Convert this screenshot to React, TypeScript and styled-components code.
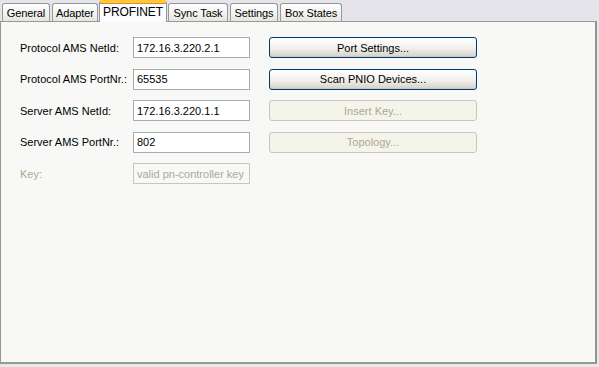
import styled, { createGlobalStyle, css } from "styled-components";
import { useState, Fragment } from "react";

const GlobalStyle = createGlobalStyle`
  html, body {
    margin: 0;
    padding: 0;
    background: #ebeae2;
  }
  body {
    font-family: Tahoma, "Liberation Sans", Arial, sans-serif;
    font-size: 11px;
    color: #000;
  }
`;

const Window = styled.div`
  width: 599px;
  height: 367px;
  display: flex;
  flex-direction: column;
  background: linear-gradient(#e4e4ea 0, #e4e4ea 21px, #ebeae2 21px);
`;

const TabStrip = styled.div`
  display: flex;
  align-items: flex-end;
  height: 21px;
  padding-left: 2px;
  position: relative;
  z-index: 1;
`;

const Tab = styled.div<{ $active?: boolean; $width: number }>`
  width: ${(p) => p.$width}px;
  height: 18px;
  box-sizing: border-box;
  margin-right: 2px;
  display: flex;
  align-items: center;
  justify-content: center;
  border: 1px solid #919b9c;
  border-bottom: none;
  border-radius: 3px 3px 0 0;
  background: linear-gradient(#ffffff, #f1f1ee 60%, #e6e5de);
  color: #000;
  white-space: nowrap;
  letter-spacing: -0.1px;
  ${(p) =>
    p.$active &&
    css`
      height: 22px;
      padding-bottom: 2px;
      margin: 0 1px -1px -1px;
      border-top: 3px solid #ffc83c;
      background: #fcfcfe;
      box-shadow: inset 0 1px 0 #e68b2c;
      font-size: 12px;
    `}
`;

const Panel = styled.div`
  width: 597px;
  height: 343px;
  box-sizing: border-box;
  border: 1px solid #919b9c;
  border-right-width: 2px;
  border-bottom-width: 2px;
  border-right-color: #8d9799;
  background: #f8f8f6;
  display: flex;
  gap: 19px;
  padding: 15px 0 0 19px;
`;

const Form = styled.div`
  display: grid;
  grid-template-columns: 113px 117px;
  grid-auto-rows: 21px;
  row-gap: 10.5px;
  align-items: center;
`;

const Label = styled.label<{ $disabled?: boolean }>`
  color: ${(p) => (p.$disabled ? "#aca899" : "#000")};
  white-space: nowrap;
`;

const Field = styled.input`
  width: 117px;
  height: 21px;
  box-sizing: border-box;
  border: 1px solid #a5acb2;
  background: #fff;
  font: inherit;
  padding: 0 3px;
  color: #000;
  outline: none;
  &:disabled {
    background: #f8f8f6;
    color: #aca899;
    border-color: #c9c7ba;
  }
`;

const Buttons = styled.div`
  display: flex;
  flex-direction: column;
  gap: 10.5px;
  padding-top: 0;
`;

const Button = styled.button`
  width: 208px;
  height: 21px;
  box-sizing: border-box;
  border: 1px solid #003c74;
  border-radius: 3px;
  background: linear-gradient(#ffffff, #f0f0ea 55%, #d6d0c5);
  box-shadow: inset 0 -1px 0 #c7c5d8, inset 0 1px 0 #fff;
  font: inherit;
  color: #000;
  padding: 0;
  &:disabled {
    border-color: #c9c7ba;
    background: #f5f4ea;
    box-shadow: none;
    color: #aca899;
  }
`;

const fields = [
  { label: "Protocol AMS NetId:", value: "172.16.3.220.2.1" },
  { label: "Protocol AMS PortNr.:", value: "65535" },
  { label: "Server AMS NetId:", value: "172.16.3.220.1.1" },
  { label: "Server AMS PortNr.:", value: "802" },
];

const tabs = [
  { name: "General", width: 48 },
  { name: "Adapter", width: 46 },
  { name: "PROFINET", width: 68 },
  { name: "Sync Task", width: 60 },
  { name: "Settings", width: 48 },
  { name: "Box States", width: 62 },
];

export default function App() {
  const [active, setActive] = useState("PROFINET");

  return (
    <Window>
      <GlobalStyle />
      <TabStrip>
        {tabs.map((t) => (
          <Tab
            key={t.name}
            $width={t.width}
            $active={t.name === active}
            onClick={() => setActive(t.name)}
          >
            {t.name}
          </Tab>
        ))}
      </TabStrip>
      <Panel>
        <Form>
          {fields.map((f) => (
            <Fragment key={f.label}>
              <Label>{f.label}</Label>
              <Field defaultValue={f.value} />
            </Fragment>
          ))}
          <Label $disabled>Key:</Label>
          <Field disabled value="valid pn-controller key" readOnly />
        </Form>
        <Buttons>
          <Button>Port Settings...</Button>
          <Button>Scan PNIO Devices...</Button>
          <Button disabled>Insert Key...</Button>
          <Button disabled>Topology...</Button>
        </Buttons>
      </Panel>
    </Window>
  );
}
